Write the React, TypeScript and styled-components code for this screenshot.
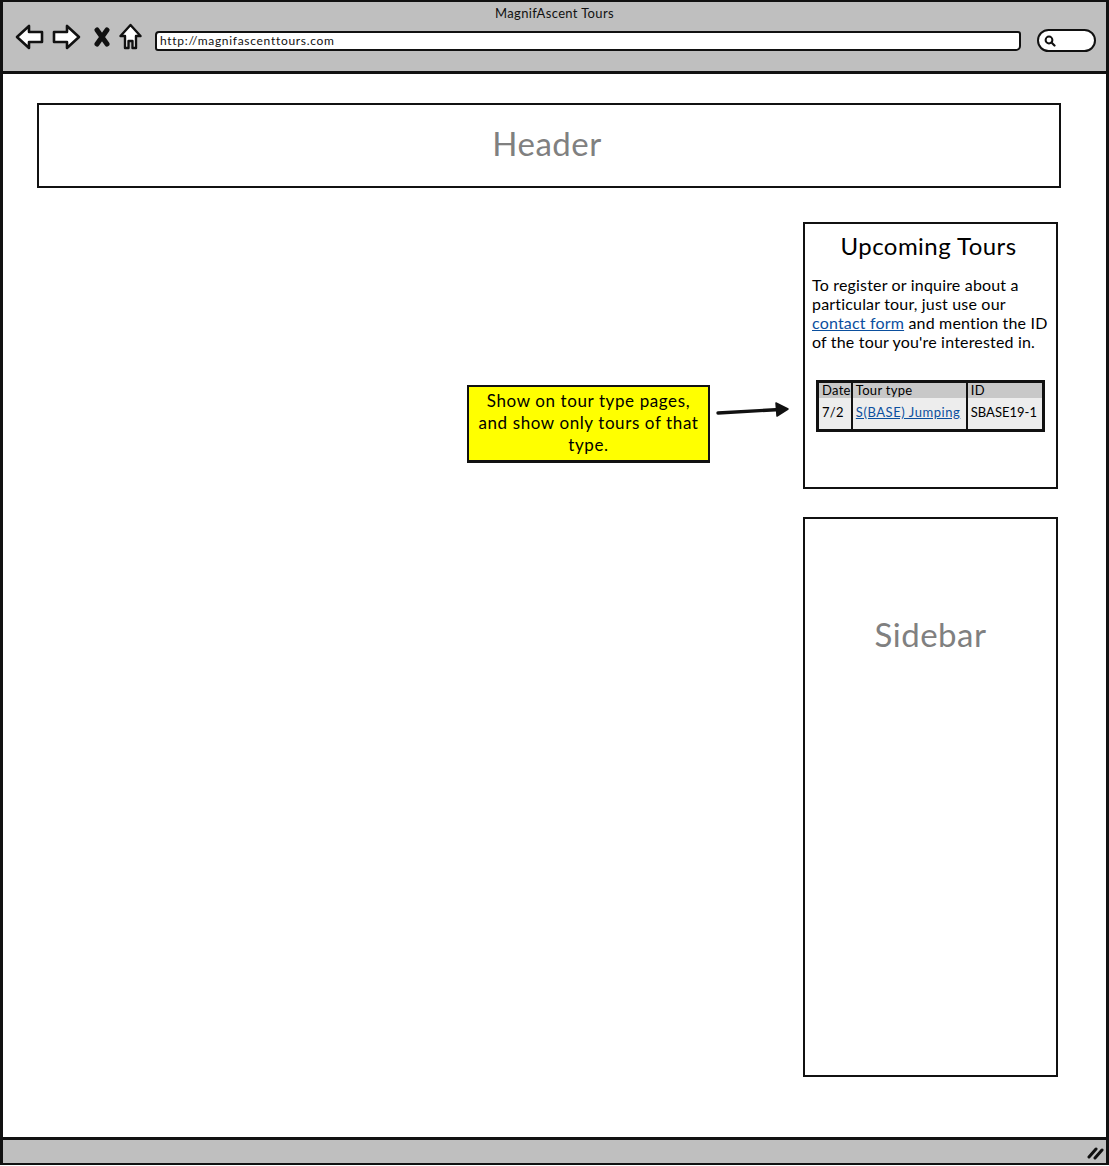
import React from 'react'
import styled, { createGlobalStyle } from 'styled-components'

const GlobalStyle = createGlobalStyle`
  html, body {
    margin: 0;
    padding: 0;
    background: #fff;
  }
  body {
    font-family: "Lato", "Open Sans", sans-serif;
    color: #000;
  }
`

const Frame = styled.div`
  box-sizing: border-box;
  width: 1109px;
  height: 1165px;
  border: 2px solid #111;
  border-left-width: 3px;
  border-right-width: 3px;
  display: flex;
  flex-direction: column;
  background: #fff;
`

const Toolbar = styled.header`
  box-sizing: border-box;
  height: 72px;
  flex: none;
  background: #bfbfbf;
  border-bottom: 3px solid #111;
  padding-top: 4px;
`

const PageTitle = styled.div`
  font-size: 13px;
  line-height: 15px;
  text-align: center;
  letter-spacing: 0.35px;
  color: #111;
`

const NavRow = styled.div`
  display: flex;
  align-items: center;
  padding-left: 12px;
`

const NavIcon = styled.svg<{ $gap?: number }>`
  display: block;
  flex: none;
  margin-right: ${(p) => p.$gap ?? 0}px;
`

const UrlBar = styled.div`
  box-sizing: border-box;
  width: 866px;
  height: 20px;
  margin: 9px 0 0 13px;
  padding-left: 3px;
  background: #fff;
  border: 2px solid #111;
  border-radius: 4px 3px 5px 3px;
  font-size: 12px;
  line-height: 15px;
  letter-spacing: 0.7px;
  color: #111;
`

const SearchPill = styled.div`
  box-sizing: border-box;
  width: 59px;
  height: 23px;
  margin: 8px 0 0 16px;
  padding: 3px 0 0 4px;
  background: #fff;
  border: 2px solid #111;
  border-radius: 12px;
`

const Content = styled.main`
  flex: 1;
  padding: 29px 46px 0 34px;
  display: flex;
  flex-direction: column;
`

const HeaderBox = styled.div`
  box-sizing: border-box;
  width: 1024px;
  height: 85px;
  border: 2px solid #111;
  display: flex;
  align-items: center;
  justify-content: center;
  padding: 0 4px 6px 0;
  font-size: 33px;
  color: #808080;
  letter-spacing: 0.5px;
`

const Columns = styled.div`
  display: flex;
  justify-content: flex-end;
  margin-top: 34px;
  padding-right: 2px;
`

const NoteRow = styled.div`
  display: flex;
  align-items: flex-start;
  margin-top: 163px;
  margin-right: 13px;
`

const Note = styled.div`
  box-sizing: border-box;
  width: 243px;
  height: 78px;
  padding: 3px 4px 0;
  background: #ffff00;
  border: 2px solid #111;
  border-bottom-width: 3px;
  text-align: center;
  font-size: 17px;
  line-height: 22px;
  letter-spacing: 0.6px;
`

const Arrow = styled.svg`
  display: block;
  flex: none;
  margin: 15px 0 0 6px;
`

const SideColumn = styled.aside`
  width: 255px;
  display: flex;
  flex-direction: column;
  gap: 28px;
`

const Panel = styled.section`
  box-sizing: border-box;
  height: 267px;
  border: 2px solid #111;
  padding: 7px 8px 0 7px;
`

const PanelTitle = styled.h2`
  margin: 0;
  padding-right: 3px;
  font-size: 24px;
  line-height: 29px;
  font-weight: 400;
  text-align: center;
  letter-spacing: 0.45px;
`

const PanelText = styled.p`
  margin: 15px 0 0;
  font-size: 16px;
  line-height: 19px;
  letter-spacing: 0.18px;
  white-space: nowrap;
`

const SketchLink = styled.a`
  color: #0b4f9e;
  text-decoration: underline;
`

const TourTable = styled.table`
  width: 229px;
  margin: 29px 0 0 4px;
  border-collapse: collapse;
  border: 3px solid #111;
  background: #ededed;
  font-size: 13px;
  letter-spacing: 0.3px;
`

const HeadCell = styled.th`
  height: 15px;
  padding: 0 0 0 3px;
  background: #c8c8c8;
  border-right: 2px solid #111;
  font-weight: 400;
  text-align: left;
  line-height: 15px;
  white-space: nowrap;
  &:last-child {
    border-right: 0;
  }
`

const BodyCell = styled.td<{ $spacing?: number }>`
  height: 27px;
  padding: 0 0 4px 3px;
  border-right: 2px solid #111;
  white-space: nowrap;
  letter-spacing: ${(p) => p.$spacing ?? 0.3}px;
  &:last-child {
    border-right: 0;
  }
`

const SidebarBox = styled.section`
  box-sizing: border-box;
  height: 560px;
  border: 2px solid #111;
  padding-top: 95px;
  text-align: center;
  font-size: 33px;
  line-height: 40px;
  color: #808080;
  letter-spacing: 0.5px;
`

const StatusBar = styled.footer`
  box-sizing: border-box;
  height: 26px;
  flex: none;
  background: #bfbfbf;
  border-top: 3px solid #111;
  display: flex;
  align-items: center;
  justify-content: flex-end;
  padding-right: 1px;
`

const tours = [{ date: '7/2', type: 'S(BASE) Jumping', id: 'SBASE19-1' }]

const App = () => {
  return (
    <Frame>
      <GlobalStyle />
      <Toolbar>
        <PageTitle>MagnifAscent Tours</PageTitle>
        <NavRow>
          <NavIcon width="29" height="26" viewBox="0 0 29 26" $gap={8}>
            <path d="M2 13 L14 2 L14 8 L27 8 L27 18 L14 18 L14 24 Z" fill="#fff" stroke="#111" strokeWidth="2.6" strokeLinejoin="round" />
          </NavIcon>
          <NavIcon width="29" height="26" viewBox="0 0 29 26" $gap={13}>
            <path d="M27 13 L15 2 L15 8 L2 8 L2 18 L15 18 L15 24 Z" fill="#fff" stroke="#111" strokeWidth="2.6" strokeLinejoin="round" />
          </NavIcon>
          <NavIcon width="16" height="20" viewBox="0 0 16 20" $gap={9}>
            <path d="M3 3 L13 17 M13 3 L3 17" fill="none" stroke="#111" strokeWidth="5" strokeLinecap="round" />
          </NavIcon>
          <NavIcon width="23" height="27" viewBox="0 0 23 27">
            <path d="M11.5 2 L21.5 13 L17 13 L17 25 L13.5 25 L13.5 18 L9.5 18 L9.5 25 L6 25 L6 13 L1.5 13 Z" fill="#fff" stroke="#111" strokeWidth="2.4" strokeLinejoin="round" />
          </NavIcon>
          <UrlBar>http://magnifascenttours.com</UrlBar>
          <SearchPill>
            <NavIcon width="13" height="13" viewBox="0 0 13 13">
              <circle cx="6" cy="6" r="3.4" fill="none" stroke="#111" strokeWidth="2" />
              <path d="M8.5 8.5 L11.5 11.5" stroke="#111" strokeWidth="2.2" strokeLinecap="round" />
            </NavIcon>
          </SearchPill>
        </NavRow>
      </Toolbar>

      <Content>
        <HeaderBox>Header</HeaderBox>
        <Columns>
          <NoteRow>
            <Note>Show on tour type pages, and show only tours of that type.</Note>
            <Arrow width="74" height="20" viewBox="0 0 74 20">
              <path d="M2 13 L64 9.5" stroke="#111" strokeWidth="3.4" strokeLinecap="round" fill="none" />
              <path d="M60 3 L72 9 L61 16 Z" fill="#111" stroke="#111" strokeWidth="1.5" strokeLinejoin="round" />
            </Arrow>
          </NoteRow>
          <SideColumn>
            <Panel>
              <PanelTitle>Upcoming Tours</PanelTitle>
              <PanelText>
                To register or inquire about a
                <br />
                particular tour, just use our
                <br />
                <SketchLink href="#">contact form</SketchLink> and mention the ID
                <br />
                of the tour you're interested in.
              </PanelText>
              <TourTable>
                <colgroup>
                  <col style={{ width: 33 }} />
                  <col style={{ width: 115 }} />
                  <col />
                </colgroup>
                <thead>
                  <tr>
                    <HeadCell>Date</HeadCell>
                    <HeadCell>Tour type</HeadCell>
                    <HeadCell>ID</HeadCell>
                  </tr>
                </thead>
                <tbody>
                  {tours.map((tour) => (
                    <tr key={tour.id}>
                      <BodyCell>{tour.date}</BodyCell>
                      <BodyCell $spacing={0.55}>
                        <SketchLink href="#">{tour.type}</SketchLink>
                      </BodyCell>
                      <BodyCell $spacing={0}>{tour.id}</BodyCell>
                    </tr>
                  ))}
                </tbody>
              </TourTable>
            </Panel>
            <SidebarBox>Sidebar</SidebarBox>
          </SideColumn>
        </Columns>
      </Content>

      <StatusBar>
        <NavIcon width="18" height="16" viewBox="0 0 18 16">
          <path d="M2 13 L9 5 M8 14 L15 6" stroke="#111" strokeWidth="3" strokeLinecap="round" fill="none" />
        </NavIcon>
      </StatusBar>
    </Frame>
  )
}

export default App
